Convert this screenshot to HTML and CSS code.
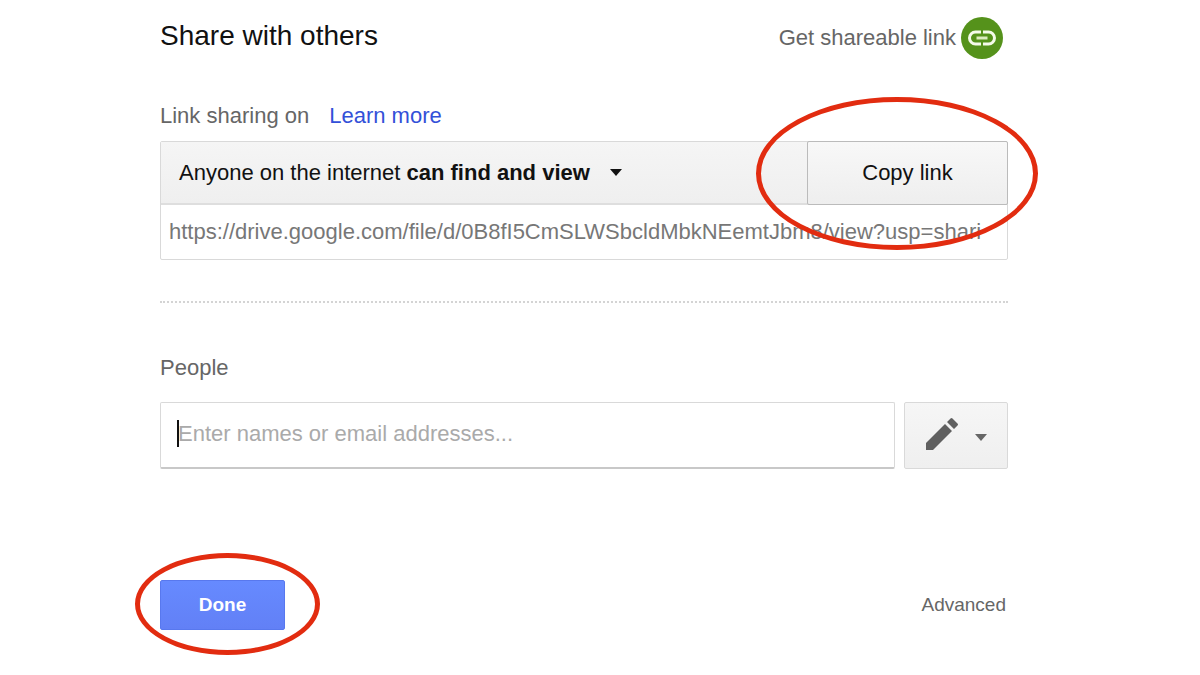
FILE: index.html
```
<!DOCTYPE html>
<html lang="en">
<head>
    <meta charset="UTF-8">
    <meta name="viewport" content="width=device-width, initial-scale=1.0">
    <title>Share with others</title>
    <link rel="stylesheet" href="styles.css">
</head>
<body>

<main class="share-dialog">
    <header class="dialog-header">
        <h1>Share with others</h1>
        <button type="button" class="shareable-link">
            Get shareable link
            <svg class="link-icon" viewBox="0 0 42 42" aria-hidden="true">
                <circle cx="21" cy="21" r="21" fill="#55921b"/>
                <path d="M20 15H14.500a6 6 0 0 0 0 12H20M22 15h5.500a6 6 0 0 1 0 12H22" fill="none" stroke="#f4fae9" stroke-width="3"/>
                <path d="M15.500 21h11" stroke="#dcecc0" stroke-width="3"/>
            </svg>
        </button>
    </header>

    <!-- Link sharing -->
    <section>
        <div class="sharing-status">
            <label for="shareUrl">Link sharing on</label>
            <a href="#">Learn more</a>
        </div>
        <div class="link-box">
            <div class="link-row">
                <button type="button" class="permission-button">
                    <span>Anyone on the internet <b>can find and view</b></span>
                    <span class="arrow"></span>
                </button>
                <div class="marked marked-copy">
                    <button type="button" class="copy-button">Copy link</button>
                </div>
            </div>
            <input type="text" id="shareUrl" class="url-input" readonly value="https://drive.google.com/file/d/0B8fI5CmSLWSbcldMbkNEemtJbm8/view?usp=shari">
        </div>
    </section>

    <!-- People -->
    <section class="people">
        <label for="people" class="people-label">People</label>
        <div class="people-row">
            <div class="people-field">
                <input type="text" id="people" class="people-input" placeholder="Enter names or email addresses...">
                <span class="caret"></span>
            </div>
            <button type="button" class="role-button" aria-label="Can edit">
                <svg class="pencil-icon" viewBox="0 0 32 32" aria-hidden="true">
                    <path d="M0 32V25L19 6L26 13L7 32ZM21 4L24.500 .5Q25.500 -.5 26.500 .5L31.500 5.500Q32.500 6.500 31.500 7.500L28 11Z" fill="#606060"/>
                </svg>
                <span class="arrow arrow-grey"></span>
            </button>
        </div>
    </section>

    <footer class="dialog-footer">
        <div class="marked marked-done">
            <button type="button" class="done-button">Done</button>
        </div>
        <a href="#" class="advanced">Advanced</a>
    </footer>
</main>

</body>
</html>
```
FILE: styles.css
```
* {
    box-sizing: border-box;
}

body {
    margin: 0;
    background-color: #fff;
    color: #111;
    font-family: "Liberation Sans", Arial, sans-serif;
    font-size: 22px;
    line-height: 26px;
}

button,
input {
    margin: 0;
    color: inherit;
    font: inherit;
}

button {
    cursor: pointer;
}

.share-dialog {
    padding: 17px 192px 40px 160px;
}

/* Header */
.dialog-header {
    display: flex;
    justify-content: space-between;
    align-items: center;
}

h1 {
    margin: 0 0 4px;
    font-size: 28px;
    font-weight: normal;
    line-height: 32px;
}

.shareable-link {
    display: flex;
    align-items: center;
    gap: 5px;
    padding: 0 5px 0 0;
    border: none;
    background: none;
    color: #666;
}

.link-icon {
    width: 42px;
    height: 42px;
}

/* Link sharing */
.sharing-status {
    display: flex;
    gap: 20px;
    margin-top: 44px;
    color: #666;
}

.sharing-status a {
    color: #3350d8;
    text-decoration: none;
}

.link-box {
    margin-top: 12px;
    border: 1px solid #d9d9d9;
    border-radius: 2px;
}

.link-row {
    display: flex;
    height: 63px;
    border-bottom: 2px solid #dedede;
    background: linear-gradient(#f5f5f5, #efefef);
}

.permission-button {
    display: flex;
    flex: 1;
    align-items: center;
    gap: 20px;
    padding: 0 18px;
    border: none;
    background: none;
}

.arrow {
    border: 6px solid transparent;
    border-top: 7px solid #111;
    border-bottom: none;
}

.arrow-grey {
    border-top-color: #666;
}

.copy-button {
    width: 201px;
    height: 64px;
    margin: -1px -1px 0 0;
    border: 1px solid #bbb;
    border-radius: 2px;
    background: linear-gradient(#f8f8f8, #eee);
}

.url-input {
    display: block;
    width: 100%;
    height: 54px;
    padding: 0 8px;
    border: none;
    background: none;
    color: #777;
}

/* People */
.people {
    margin-top: 41px;
    padding-top: 52px;
    border-top: 2px dotted #d4d4d4;
}

.people-label {
    display: block;
    color: #666;
}

.people-row {
    display: flex;
    gap: 9px;
    margin-top: 21px;
}

.people-field {
    position: relative;
    flex: 1;
}

.people-input {
    display: block;
    width: 100%;
    height: 67px;
    padding: 0 17px 2px;
    border: 1px solid #d9d9d9;
    border-bottom: 2px solid #c8c8c8;
    border-radius: 2px;
    outline: none;
}

.people-input::placeholder {
    color: #aaa;
}

.caret {
    position: absolute;
    top: 18px;
    left: 17px;
    width: 2px;
    height: 27px;
    background-color: #111;
}

.role-button {
    display: flex;
    justify-content: center;
    align-items: center;
    gap: 17px;
    width: 104px;
    padding: 0 0 4px;
    border: 1px solid #d9d9d9;
    border-radius: 2px;
    background: linear-gradient(#f6f6f6, #efefef);
}

.role-button .arrow {
    margin-top: 8px;
}

.pencil-icon {
    width: 32px;
    height: 32px;
}

/* Footer */
.dialog-footer {
    display: flex;
    justify-content: space-between;
    align-items: center;
    margin-top: 111px;
    font-size: 19px;
}

.done-button {
    display: block;
    width: 125px;
    height: 50px;
    border: 1px solid #5878ee;
    border-radius: 2px;
    background: linear-gradient(#668aff, #6280f6);
    color: #fff;
    font-weight: bold;
}

.advanced {
    padding-right: 2px;
    color: #666;
    text-decoration: none;
}

/* Red rings around the two buttons */
.marked {
    position: relative;
}

.marked::after {
    content: "";
    position: absolute;
    border: 5px solid #e22c10;
    border-radius: 50%;
    pointer-events: none;
}

.marked-copy::after {
    inset: -45px -31px -47px -51px;
}

.marked-done::after {
    inset: -27px -35px -25px -25px;
}
```
